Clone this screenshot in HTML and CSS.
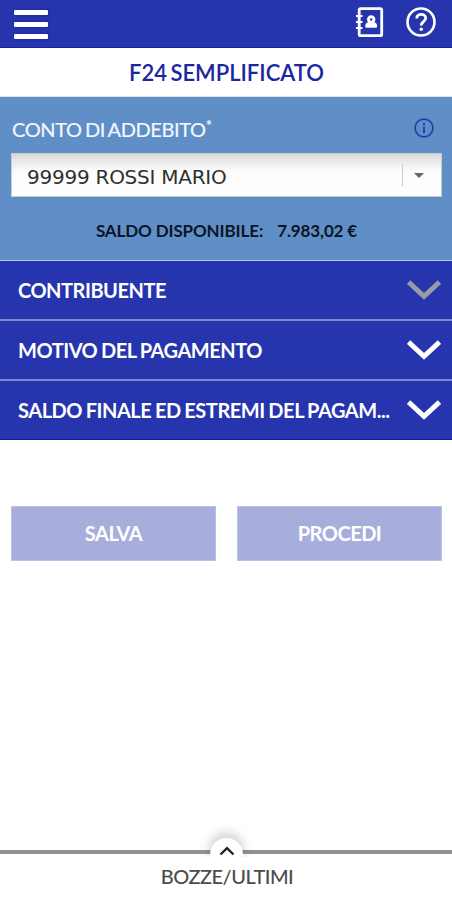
FILE: index.html
```html
<!DOCTYPE html>
<html lang="it">
<head>
<meta charset="utf-8">
<title>F24 Semplificato</title>
<link rel="stylesheet" href="styles.css">
</head>
<body>
<div class="app">
  <header class="topbar">
    <div class="menu"><i></i><i></i><i></i></div>
    <div class="tools">
      <svg width="28" height="32" viewBox="0 0 28 32" fill="none" stroke="#fff">
        <rect x="3.200" y="1.700" width="22.500" height="27" rx="1.500" stroke-width="2.800"/>
        <path d="M0 9h6.500M0 15h6.500M0 21h6.500" stroke-width="2.200"/>
        <circle cx="15.200" cy="12.500" r="2.700" stroke-width="3"/>
        <path d="M10.700 19.200q0-2.900 4.500-2.900t4.500 2.900z" stroke-width="3" stroke-linejoin="round"/>
      </svg>
      <svg width="30" height="30" viewBox="0 0 30 30" fill="none" stroke="#fff" stroke-width="2.600">
        <circle cx="15" cy="15" r="13.500"/>
        <path d="M10.700 11.500c0-5.700 9-5.400 9-.400 0 3.600-4.500 3.600-4.500 7.400" stroke-width="2.800"/>
        <circle cx="15.200" cy="22.300" r="1.700" fill="#fff" stroke="none"/>
      </svg>
    </div>
  </header>
  <h1 class="title"><span>F24 SEMPLIFICATO</span></h1>
  <section class="account">
    <div class="account-head">
      <label class="label">CONTO DI ADDEBITO<sup>*</sup></label>
      <svg class="info" width="20" height="20" viewBox="0 0 20 20" fill="none" stroke="#243db8">
        <circle cx="10" cy="10" r="8.900" stroke-width="1.700"/>
        <path d="M10 8.500v6.500M10 5v2" stroke-width="2"/>
      </svg>
    </div>
    <div class="select">
      <span class="value">99999 ROSSI MARIO</span>
      <span class="arrow"><i></i></span>
    </div>
    <div class="balance"><span>SALDO DISPONIBILE:</span><span class="amount">7.983,02 €</span></div>
  </section>
  <nav class="sections">
    <div class="row"><span>CONTRIBUENTE</span><svg class="muted" width="34" height="20" viewBox="0 0 34 20"><path d="M1.500 2L17 16.300 32.500 2"/></svg></div>
    <div class="row"><span>MOTIVO DEL PAGAMENTO</span><svg width="34" height="20" viewBox="0 0 34 20"><path d="M1.500 2L17 16.300 32.500 2"/></svg></div>
    <div class="row"><span>SALDO FINALE ED ESTREMI DEL PAGAM...</span><svg width="34" height="20" viewBox="0 0 34 20"><path d="M1.500 2L17 16.300 32.500 2"/></svg></div>
  </nav>
  <div class="actions">
    <button>SALVA</button>
    <button>PROCEDI</button>
  </div>
  <footer class="drawer">
    <div class="handle"><svg width="16" height="10" viewBox="0 0 16 10"><path d="M1.500 8.500L8 2.200 14.500 8.500"/></svg></div>
    <span>BOZZE/ULTIMI</span>
  </footer>
</div>
</body>
</html>
```
FILE: styles.css
```css
* { box-sizing: border-box; }
body { margin: 0; background: #fff; font-family: Lato, "Liberation Sans", sans-serif; }
.app { width: 452px; height: 900px; display: flex; flex-direction: column; overflow: hidden; }
.topbar { height: 48px; background: #2635ad; border-bottom: 1px solid #1422a0; display: flex; justify-content: space-between; padding: 0 16px 0 14px; flex: none; }
.menu { display: flex; flex-direction: column; gap: 7px; padding-top: 9.500px; width: 34px; }
.menu i { height: 5.200px; border-radius: 1px; background: #fff; box-shadow: 0 0 2px 1px #1320a080; }
.tools { display: flex; gap: 22px; padding-top: 7px; }
.title { margin: 0; height: 49px; display: flex; align-items: center; justify-content: center; font-size: 22px; word-spacing: -2px; font-weight: 600; color: #1a27a0; border-bottom: 1px solid #d5e2f0; flex: none; padding-left: 1px; }
.account { height: 163px; background: #5f8fc6; padding: 0 10px 0 11px; flex: none; }
.account-head { height: 56px; display: flex; justify-content: space-between; padding: 21px 8px 0 1px; }
.label { color: #f2f7ff; font-size: 20px; line-height: 23px; letter-spacing: -.38px; word-spacing: -1.500px; white-space: nowrap; -webkit-text-stroke: .2px; }
.label sup { font-size: 15px; line-height: 0; vertical-align: 6px; }
.select { height: 44px; border: 1px solid #c5ccd3; background: linear-gradient(#dadada, #fbfbfb 40%, #fff); display: flex; align-items: center; justify-content: space-between; }
.value { font: 20px "DejaVu Sans", sans-serif; letter-spacing: -.25px; color: #303030; padding: 4px 0 0 15px; }
.arrow { width: 39px; height: 22px; border-left: 1px solid #ccc; display: flex; align-items: center; padding-left: 11px; }
.arrow i { border: 5px solid transparent; border-top-color: #666; border-bottom: 0; }
.balance { display: flex; justify-content: center; gap: 14px; padding-top: 24px; font-size: 17px; line-height: 20px; letter-spacing: -.12px; font-weight: 700; color: #0b1526; }
.sections { flex: none; height: 180px; border-top: 1px solid #b5c9e8; background: #2635ad; }
.row { height: 60px; display: flex; align-items: center; justify-content: space-between; padding: 0 11px 0 18px; border-bottom: 2px solid #8188cb; color: #fff; font-size: 20px; letter-spacing: -.48px; word-spacing: -.8px; font-weight: 700; white-space: nowrap; }
.row span { padding-bottom: 1px; }
.row:last-child { height: 59px; border-bottom: 1px solid #101d9b; }
.row:nth-child(n+2) span { letter-spacing: -.46px; }
.row path { fill: none; stroke: #fff; stroke-width: 5; }
.row .muted path { stroke: #999ba3; }
.actions { flex: none; display: grid; grid-template-columns: 1fr 1fr; gap: 21px; padding: 66px 10px 0 11px; }
button { height: 55px; border: 1px solid #bcc0e3; background: #a8aedc; color: #fff; font: 700 20px Lato, sans-serif; letter-spacing: -.5px; padding: 0 0 2px; }
.drawer { margin-top: auto; height: 50px; border-top: 4px solid #929292; display: flex; justify-content: center; padding: 10px 0 0 2px; font-size: 20px; line-height: 24px; letter-spacing: -.5px; font-weight: 500; color: #4c4c4c; position: relative; }
.handle { position: absolute; left: 210px; top: -16px; width: 33px; height: 33px; border-radius: 50%; background: #fff; box-shadow: 0 -5px 12px #0003; display: flex; justify-content: center; padding-top: 8px; clip-path: inset(-20px -20px 14px -20px); }
.handle path { fill: none; stroke: #222; stroke-width: 2.400; }
```
